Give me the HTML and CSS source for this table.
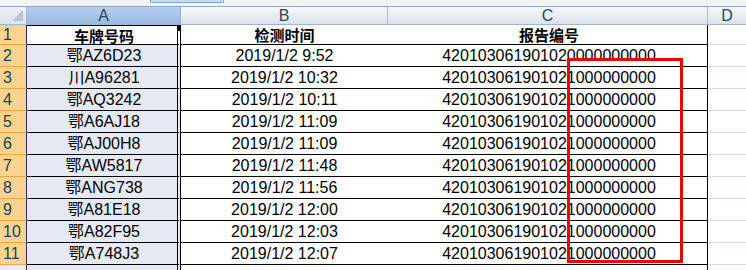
FILE: index.html
```html
<!DOCTYPE html>
<html lang="zh">
<head>
<meta charset="utf-8">
<link rel="stylesheet" href="styles.css">
</head>
<body>
<div class="page">
  <div class="topbar"><div class="tab"></div></div>
  <div class="sheet">
    <div class="corner"><span class="tri"></span></div>
    <div class="colhdr sel">A</div>
    <div class="colhdr">B</div>
    <div class="colhdr">C</div>
    <div class="colhdr last">D</div>

    <div class="rowhdr">1</div>
    <div class="cell a active head">车牌号码<span class="handle"></span></div>
    <div class="cell b head">检测时间</div>
    <div class="cell c head">报告编号</div>
    <div class="cell d"></div>

    <div class="rowhdr">2</div>
    <div class="cell a">鄂AZ6D23</div>
    <div class="cell b">2019/1/2 9:52</div>
    <div class="cell c">420103061901020000000000</div>
    <div class="cell d"></div>

    <div class="rowhdr">3</div>
    <div class="cell a">川A96281</div>
    <div class="cell b">2019/1/2 10:32</div>
    <div class="cell c">420103061901021000000000</div>
    <div class="cell d"></div>

    <div class="rowhdr">4</div>
    <div class="cell a">鄂AQ3242</div>
    <div class="cell b">2019/1/2 10:11</div>
    <div class="cell c">420103061901021000000000</div>
    <div class="cell d"></div>

    <div class="rowhdr">5</div>
    <div class="cell a">鄂A6AJ18</div>
    <div class="cell b">2019/1/2 11:09</div>
    <div class="cell c">420103061901021000000000</div>
    <div class="cell d"></div>

    <div class="rowhdr">6</div>
    <div class="cell a">鄂AJ00H8</div>
    <div class="cell b">2019/1/2 11:09</div>
    <div class="cell c">420103061901021000000000</div>
    <div class="cell d"></div>

    <div class="rowhdr">7</div>
    <div class="cell a">鄂AW5817</div>
    <div class="cell b">2019/1/2 11:48</div>
    <div class="cell c">420103061901021000000000</div>
    <div class="cell d"></div>

    <div class="rowhdr">8</div>
    <div class="cell a">鄂ANG738</div>
    <div class="cell b">2019/1/2 11:56</div>
    <div class="cell c">420103061901021000000000</div>
    <div class="cell d"></div>

    <div class="rowhdr">9</div>
    <div class="cell a">鄂A81E18</div>
    <div class="cell b">2019/1/2 12:00</div>
    <div class="cell c">420103061901021000000000</div>
    <div class="cell d"></div>

    <div class="rowhdr">10</div>
    <div class="cell a">鄂A82F95</div>
    <div class="cell b">2019/1/2 12:03</div>
    <div class="cell c">420103061901021000000000</div>
    <div class="cell d"></div>

    <div class="rowhdr">11</div>
    <div class="cell a">鄂A748J3</div>
    <div class="cell b">2019/1/2 12:07</div>
    <div class="cell c">420103061901021000000000</div>
    <div class="cell d"></div>

    <div class="rowhdr plain"></div>
    <div class="cell a"></div>
    <div class="cell b"></div>
    <div class="cell c"></div>
    <div class="cell d"></div>
  </div>
  <div class="redbox"></div>
</div>
</body>
</html>
```

FILE: styles.css
```css
html, body {
  margin: 0;
  padding: 0;
  background: #ffffff;
}
.page {
  position: relative;
  width: 746px;
  height: 270px;
  overflow: hidden;
  font-family: "Liberation Sans", "Noto Sans CJK SC", sans-serif;
}
.topbar {
  height: 6px;
  background: #f3f4f6;
  border-bottom: 1px solid #8ea6c3;
  display: flex;
}
.tab {
  margin-left: 150px;
  width: 72px;
  height: 2px;
  background: #c9d9ee;
  border: 1px solid #86a4c8;
  border-top: none;
  border-radius: 0 0 2px 2px;
}
.sheet {
  display: grid;
  grid-template-columns: 27px 154px 207px 320px 38px;
  grid-template-rows: 18px 20px repeat(10, 22px) 22px;
}
.sheet > div {
  box-sizing: border-box;
}
.corner {
  position: relative;
  background: linear-gradient(#eef1f5, #dde3ea);
  border-right: 1px solid #9eb6ce;
  border-bottom: 1px solid #9eb6ce;
}
.tri {
  position: absolute;
  right: 3px;
  bottom: 3px;
  width: 0;
  height: 0;
  border-left: 11px solid transparent;
  border-bottom: 11px solid #b6c4d6;
}
.colhdr {
  background: linear-gradient(#f7f9fc, #e6ebf2 60%, #dbe2ec);
  border-right: 1px solid #a9bdd4;
  border-bottom: 1px solid #9eb6ce;
  color: #2a4466;
  font-size: 16px;
  display: flex;
  align-items: center;
  justify-content: center;
  line-height: 1;
}
.colhdr.sel {
  background: linear-gradient(#b4cfee, #a2c2e8 60%, #98bae4);
  border-right-color: #8eaed6;
}
.colhdr.last {
  border-right: none;
}
.rowhdr {
  background: #fcd48f;
  border-right: 1px solid #2c3038;
  border-bottom: 1px solid #f0a84a;
  color: #233c57;
  font-size: 16px;
  display: flex;
  align-items: center;
  padding-left: 3px;
  line-height: 1;
}
.rowhdr.plain {
  background: #e8edf4;
  border-bottom-color: #c7d3e2;
}
.cell {
  display: flex;
  align-items: center;
  justify-content: center;
  font-size: 16px;
  color: #000;
  border-bottom: 1px solid #000;
  white-space: nowrap;
  line-height: 1;
}
.cell.a {
  position: relative;
  background: #e5e9f3;
  border-right: 4px double #000;
  padding-left: 4px;
}
.cell.a.active {
  background: #ffffff;
  border-top: 1px solid #000;
}
.cell.head {
  font-family: "Noto Sans CJK SC", sans-serif;
  font-weight: bold;
  font-size: 15px;
}
.cell.c {
  border-right: 1px solid #000;
  padding-left: 3px;
}
.cell.d {
  border-bottom: 1px solid #d4dbe6;
}
.handle {
  position: absolute;
  right: -4px;
  top: -1px;
  width: 4px;
  height: 6px;
  background: #000;
}
.redbox {
  position: absolute;
  left: 567px;
  top: 58px;
  width: 116px;
  height: 205px;
  box-sizing: border-box;
  border: 3px solid #ee0000;
}
```
